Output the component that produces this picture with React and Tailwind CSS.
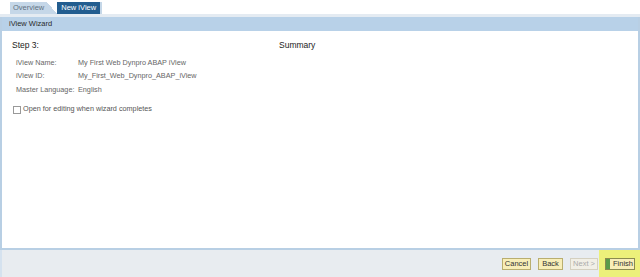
export default function App() {
  const font = { fontFamily: '"Liberation Sans", Arial, sans-serif' };
  return (
    <div
      className="flex h-[277px] w-[640px] flex-col bg-white text-[7.25px] text-[#333]"
      style={font}
    >
      {/* tab strip */}
      <div className="flex h-[17px] items-end border-b-[3px] border-[#e4ebf2] bg-white pl-[10px]">
        <div className="flex h-[12px] items-center bg-[#c5d7e8] px-[3px] text-[7.5px] text-[#5f7182]">
          Overview
        </div>
        <div className="h-[12px] w-[10px] bg-[linear-gradient(to_top_right,#c5d7e8_50%,white_50%)]" />
        <div className="flex h-[12px] items-center bg-[#235d8f] px-[4px] text-[7.5px] text-white">
          New iView
        </div>
        <div className="h-[12px] w-[2px] bg-[#c5d7e8]" />
      </div>

      {/* wizard panel */}
      <div className="flex flex-1 flex-col border-x-2 border-[#b8cfe4]">
        <div className="flex h-[14px] items-center bg-[#b8d1e8] pl-[7px] text-[7.5px] text-[#2a2a2a]">
          iView Wizard
        </div>
        <div className="flex-1 border-b-2 border-[#b8cfe4] bg-white px-[10px] pt-[8px]">
          <div className="flex text-[8.5px] text-[#222]">
            <div className="w-[267px]">Step 3:</div>
            <div>Summary</div>
          </div>
          <div className="mt-[6px] flex flex-col gap-[2.5px] pl-[4px] text-[#666]">
            <div className="flex">
              <span className="w-[62px]">iView Name:</span>
              <span>My First Web Dynpro ABAP iView</span>
            </div>
            <div className="flex">
              <span className="w-[62px]">iView ID:</span>
              <span>My_First_Web_Dynpro_ABAP_iView</span>
            </div>
            <div className="flex">
              <span className="w-[62px]">Master Language:</span>
              <span>English</span>
            </div>
          </div>
          <div className="mt-[9px] flex items-center gap-[2px] pl-[1px] text-[#555]">
            <span className="h-[8px] w-[8px] border border-[#999] bg-white" />
            <span>Open for editing when wizard completes</span>
          </div>
        </div>
      </div>

      {/* footer */}
      <div className="flex h-[27px] items-center justify-end gap-[7px] border-l-2 border-[#d5e2ef] bg-[#e8ecf0]">
        <button className="h-[12px] w-[29px] border border-[#b9ae6f] bg-[#f8eeb8] text-[7.5px] leading-none text-[#333]">
          Cancel
        </button>
        <button className="h-[12px] w-[25px] border border-[#b9ae6f] bg-[#f8eeb8] text-[7.5px] leading-none text-[#333]">
          Back
        </button>
        <button className="h-[12px] w-[28px] border border-[#d4d0c0] bg-[#f1efe6] text-[7.5px] leading-none text-[#aaa]">
          Next &gt;
        </button>
        <div className="-ml-[6px] flex h-[27px] w-[41px] items-center bg-[#ecf07a] pl-[6px]">
          <button className="flex h-[12px] w-[30px] items-center border border-[#8a8a50] bg-[#f8eeb8] text-[7.5px] leading-none text-[#333]">
            <span className="mr-[3px] h-full w-[4px] bg-[#5a9a4a]" />
            Finish
          </button>
        </div>
      </div>
    </div>
  );
}
